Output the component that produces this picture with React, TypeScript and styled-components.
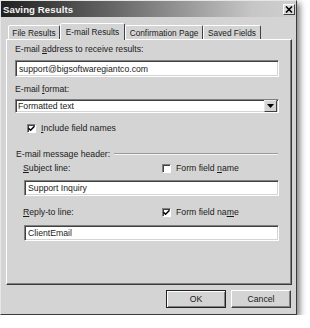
import React from "react";
import styled, { createGlobalStyle } from "styled-components";

const GlobalStyle = createGlobalStyle`
  * { box-sizing: border-box; }
  body {
    margin: 0;
    background: #fff;
    font-family: "Liberation Sans", Arial, sans-serif;
  }
`;

const Window = styled.div`
  width: 297px;
  height: 315px;
  background: #d4d4d4;
  border: 1px solid;
  border-color: #e6e6e6 #3a3a3a #3a3a3a #e6e6e6;
  box-shadow: 3px 3px 6px rgba(0, 0, 0, 0.5);
  display: flex;
  flex-direction: column;
  font-size: 8.7px;
  color: #1a1a1a;
`;

const TitleBar = styled.div`
  height: 16px;
  display: flex;
  align-items: center;
  padding: 0 1px 0 2px;
  background: linear-gradient(to right, #202020 0%, #6a6a6a 40%, #c6c6c6 85%, #cfcfcf 100%);
`;

const Title = styled.span`
  font-weight: bold;
  font-size: 9.6px;
  color: #f4f4f4;
  letter-spacing: 0.1px;
`;

const CloseButton = styled.div`
  margin-left: auto;
  width: 12px;
  height: 11px;
  background: #dcdcdc;
  border: 1px solid;
  border-color: #fff #404040 #404040 #fff;
  display: flex;
  align-items: center;
  justify-content: center;
`;

const Body = styled.div`
  flex: 1;
  display: flex;
  flex-direction: column;
  padding: 6px 0 0 5px;
`;

const TabRow = styled.div`
  position: relative;
  z-index: 1;
  display: flex;
  align-items: flex-end;
  height: 17px;
  margin: 0 0 -1px 2px;
`;

const Tab = styled.div<{ $w: number; $active?: boolean }>`
  width: ${(p) => p.$w}px;
  height: ${(p) => (p.$active ? 17 : 14)}px;
  margin-bottom: ${(p) => (p.$active ? 0 : 1)}px;
  display: flex;
  align-items: center;
  justify-content: center;
  font-size: 8.3px;
  background: #d4d4d4;
  border: 1px solid;
  border-bottom: none;
  border-color: #fff #404040 transparent #fff;
  border-radius: 2px 2px 0 0;
  white-space: nowrap;
`;

const Panel = styled.div`
  width: 286px;
  height: 246px;
  border: 1px solid;
  border-color: #fff #3a3a3a #3a3a3a #fff;
  box-shadow: inset -1px -1px 0 #808080;
  padding: 2px 12px 0 8px;
  display: flex;
  flex-direction: column;
`;

const Label = styled.div<{ $top: number; $indent?: number }>`
  height: 12px;
  line-height: 12px;
  margin-top: ${(p) => p.$top}px;
  margin-left: ${(p) => p.$indent ?? 0}px;
  white-space: nowrap;
`;

const TextBox = styled.div<{ $top: number; $h: number; $indent?: number }>`
  height: ${(p) => p.$h}px;
  margin-top: ${(p) => p.$top}px;
  margin-left: ${(p) => p.$indent ?? 0}px;
  background: #fff;
  border: 1px solid;
  border-color: #808080 #fff #fff #808080;
  box-shadow: inset 1px 1px 0 #404040, inset -1px -1px 0 #d4d4d4;
  padding-left: 3px;
  display: flex;
  align-items: center;
  white-space: nowrap;
`;

const Select = styled(TextBox)`
  padding-left: 2px;
  padding-right: 1px;
`;

const SelectText = styled.span`
  flex: 1;
`;

const ArrowButton = styled.div`
  width: 13px;
  height: 12px;
  background: #d4d4d4;
  border: 1px solid;
  border-color: #e8e8e8 #404040 #404040 #e8e8e8;
  display: flex;
  align-items: center;
  justify-content: center;
`;

const CheckRow = styled.div<{ $top: number; $indent: number }>`
  display: flex;
  align-items: center;
  height: 12px;
  margin-top: ${(p) => p.$top}px;
  margin-left: ${(p) => p.$indent}px;
  gap: 5px;
  white-space: nowrap;
`;

const Box = styled.div`
  width: 9px;
  height: 9px;
  background: #fff;
  border: 1px solid;
  border-color: #808080 #fff #fff #808080;
  box-shadow: inset 1px 1px 0 #404040;
  display: flex;
  align-items: center;
  justify-content: center;
`;

const GroupHeader = styled.div`
  display: flex;
  align-items: center;
  height: 12px;
  margin: 14px 1px 0 1px;
  white-space: nowrap;
`;

const Etched = styled.div`
  flex: 1;
  margin-left: 4px;
  border-top: 1px solid #9a9a9a;
  border-bottom: 1px solid #f4f4f4;
`;

const FieldRow = styled.div<{ $top: number }>`
  display: grid;
  grid-template-columns: 139px auto;
  align-items: center;
  height: 12px;
  margin: ${(p) => p.$top}px 0 0 8px;
  white-space: nowrap;
`;

const ButtonRow = styled.div`
  display: flex;
  justify-content: flex-end;
  gap: 5px;
  margin: 5px 5px 0 0;
`;

const Button = styled.div<{ $default?: boolean }>`
  width: 60px;
  height: 18px;
  display: flex;
  align-items: center;
  justify-content: center;
  background: #d4d4d4;
  border: 1px solid;
  border-color: ${(p) => (p.$default ? "#202020" : "#fff #404040 #404040 #fff")};
  box-shadow: ${(p) =>
    p.$default
      ? "inset 1px 1px 0 #fff, inset -1px -1px 0 #808080"
      : "inset -1px -1px 0 #808080"};
`;

function Check({ on }: { on?: boolean }) {
  return (
    <Box>
      {on && (
        <svg width="7" height="7" viewBox="0 0 7 7">
          <path d="M0.5 3.2 L2.6 5.3 L6.5 1.2" stroke="#000" strokeWidth="1.5" fill="none" />
        </svg>
      )}
    </Box>
  );
}

const tabs = [
  { label: "File Results", w: 52 },
  { label: "E-mail Results", w: 65, active: true },
  { label: "Confirmation Page", w: 78 },
  { label: "Saved Fields", w: 58 },
];

export default function App() {
  return (
    <>
      <GlobalStyle />
      <Window>
        <TitleBar>
          <Title>Saving Results</Title>
          <CloseButton>
            <svg width="8" height="7" viewBox="0 0 8 7">
              <path d="M1 0.5 L7 6.5 M7 0.5 L1 6.5" stroke="#000" strokeWidth="1.6" />
            </svg>
          </CloseButton>
        </TitleBar>
        <Body>
          <TabRow>
            {tabs.map((t) => (
              <Tab key={t.label} $w={t.w} $active={t.active}>
                {t.label}
              </Tab>
            ))}
          </TabRow>
          <Panel>
            <Label $top={1}>
              E-mail <u>a</u>ddress to receive results:
            </Label>
            <TextBox $top={5} $h={17}>support@bigsoftwaregiantco.com</TextBox>
            <Label $top={6}>
              E-mail <u>f</u>ormat:
            </Label>
            <Select $top={4} $h={14}>
              <SelectText>Formatted text</SelectText>
              <ArrowButton>
                <svg width="7" height="4" viewBox="0 0 7 4">
                  <path d="M0 0 H7 L3.5 4 Z" fill="#000" />
                </svg>
              </ArrowButton>
            </Select>
            <CheckRow $top={9} $indent={12}>
              <Check on />
              <span>
                <u>I</u>nclude field names
              </span>
            </CheckRow>
            <GroupHeader>
              E-mail message header:
              <Etched />
            </GroupHeader>
            <FieldRow $top={2}>
              <span>
                <u>S</u>ubject line:
              </span>
              <CheckRow $top={0} $indent={0}>
                <Check />
                <span>
                  Form field <u>n</u>ame
                </span>
              </CheckRow>
            </FieldRow>
            <TextBox $top={6} $h={16} $indent={9}>
              Support Inquiry
            </TextBox>
            <FieldRow $top={10}>
              <span>
                <u>R</u>eply-to line:
              </span>
              <CheckRow $top={0} $indent={0}>
                <Check on />
                <span>
                  Form field na<u>m</u>e
                </span>
              </CheckRow>
            </FieldRow>
            <TextBox $top={7} $h={16} $indent={9}>
              ClientEmail
            </TextBox>
          </Panel>
          <ButtonRow>
            <Button $default>OK</Button>
            <Button>Cancel</Button>
          </ButtonRow>
        </Body>
      </Window>
    </>
  );
}
